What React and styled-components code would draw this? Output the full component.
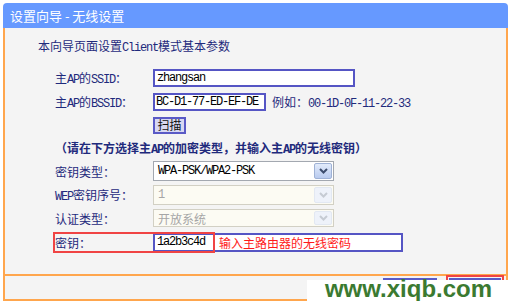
import styled, { createGlobalStyle } from "styled-components";

const GlobalStyle = createGlobalStyle`
  body {
    margin: 0;
    background: #fff;
    font-family: "Noto Sans CJK SC", sans-serif;
    font-size: 12px;
  }
`;

// ASCII runs use a narrow mono face, like the router page's SimSun
const mix = (text) =>
  text
    .split(/([\x21-\x7e]+)/)
    .filter(Boolean)
    .map((part, i) =>
      /^[\x21-\x7e]+$/.test(part) ? <Mono key={i}>{part}</Mono> : part
    );

const Chevron = ({ color }) => (
  <svg width="9" height="6" viewBox="0 0 9 6">
    <path d="M1 1 L4.5 4.5 L8 1" fill="none" stroke={color} strokeWidth="2" />
  </svg>
);

const App = () => {
  return (
    <>
      <GlobalStyle />
      <Panel>
        <Header>设置向导 - 无线设置</Header>
        <Body>
          <Title>{mix("本向导页面设置Client模式基本参数")}</Title>
          <Row $h={24}>
            <Label>{mix("主AP的SSID：")}</Label>
            <Input $w={202} $h={18}>
              <Mono>zhangsan</Mono>
            </Input>
          </Row>
          <Row $h={24}>
            <Label>{mix("主AP的BSSID：")}</Label>
            <Inline>
              <Input $w={113} $h={18} $pad={1}>
                <Mono>BC-D1-77-ED-EF-DE</Mono>
              </Input>
              <Hint>{mix("例如：00-1D-0F-11-22-33")}</Hint>
            </Inline>
          </Row>
          <Row $h={22}>
            <span />
            <div>
              <Button $w={33} $h={17}>扫描</Button>
            </div>
          </Row>
          <Row $h={23}>
            <Note>{mix("（请在下方选择主AP的加密类型，并输入主AP的无线密钥）")}</Note>
          </Row>
          <Row $h={24}>
            <Label>密钥类型：</Label>
            <Select>
              <SelectValue>
                <Mono>WPA-PSK/WPA2-PSK</Mono>
              </SelectValue>
              <DropButton>
                <Chevron color="#3d4d6e" />
              </DropButton>
            </Select>
          </Row>
          <Row $h={24}>
            <Label>{mix("WEP密钥序号：")}</Label>
            <Select $disabled>
              <SelectValue>
                <Mono>1</Mono>
              </SelectValue>
              <DropButton $disabled>
                <Chevron color="#c6cbd3" />
              </DropButton>
            </Select>
          </Row>
          <Row $h={22}>
            <Label>认证类型：</Label>
            <Select $disabled $h={18}>
              <SelectValue>开放系统</SelectValue>
              <DropButton $disabled>
                <Chevron color="#c6cbd3" />
              </DropButton>
            </Select>
          </Row>
          <Row $h={26}>
            <Label>密钥：</Label>
            <Input $w={250} $h={19}>
              <Mono>1a2b3c4d</Mono>
              <RedHint>输入主路由器的无线密码</RedHint>
            </Input>
            <Mark />
          </Row>
        </Body>
        <Footer>
          {/* labels are hidden under the watermark in the screenshot */}
          <Button $w={54} $h={19} aria-label="上一步" />
          <Button $w={52} $h={19} $marked aria-label="下一步" />
          <Watermark>www.xiqb.com</Watermark>
        </Footer>
      </Panel>
    </>
  );
};

const Panel = styled.div`
  margin: 3px 0 0 3px;
  width: 505px;
`;

const Header = styled.div`
  height: 25px;
  background: #6699ff;
  border-radius: 4px 4px 0 0;
  color: #fff;
  font-size: 13px;
  line-height: 25px;
  padding-left: 7px;
  white-space: pre;
`;

const Body = styled.div`
  height: 238px;
  padding-top: 8px;
  background: #f4f4f4;
  border: 2px solid #ffa64d;
  border-top: none;
`;

const Title = styled.div`
  height: 20px;
  line-height: 20px;
  padding-left: 33px;
  margin-bottom: 10px;
  color: #1f2a7c;
`;

const Row = styled.div`
  position: relative;
  display: grid;
  grid-template-columns: 98px 1fr;
  align-items: center;
  height: ${(p) => p.$h}px;
  padding-left: 50px;
`;

const Label = styled.div`
  color: #1f2a7c;
  white-space: nowrap;
`;

const Note = styled(Label)`
  grid-column: 1 / -1;
  font-weight: bold;
`;

const Mono = styled.span`
  font-family: "Liberation Mono", monospace;
  font-size: 12px;
  letter-spacing: -1.2px;
`;

const Inline = styled.div`
  display: flex;
  align-items: center;
  gap: 6px;
`;

const Hint = styled.span`
  color: #1f2a7c;
  white-space: nowrap;
`;

const Input = styled.div`
  box-sizing: border-box;
  width: ${(p) => p.$w}px;
  height: ${(p) => p.$h}px;
  display: flex;
  align-items: center;
  padding-left: ${(p) => p.$pad ?? 2}px;
  background: #fff;
  border: 2px solid #5555c4;
  color: #000;
  white-space: nowrap;
  overflow: hidden;
`;

const RedHint = styled.span`
  color: #ff1a1a;
  margin-left: 14px;
`;

const Mark = styled.div`
  position: absolute;
  left: 48px;
  top: 3px;
  width: 162px;
  height: 21px;
  box-sizing: border-box;
  border: 2px solid #f04444;
  pointer-events: none;
`;

const Button = styled.button`
  box-sizing: border-box;
  width: ${(p) => p.$w}px;
  height: ${(p) => p.$h}px;
  padding: 0;
  font-family: "Noto Sans CJK SC", sans-serif;
  font-size: 12px;
  line-height: 1;
  color: #111;
  background: #d8d8f2;
  border: 2px solid #5a5ac6;
  outline: ${(p) => (p.$marked ? "2px solid #f04444" : "none")};
  outline-offset: 1px;
`;

const Select = styled.div`
  box-sizing: border-box;
  width: 181px;
  height: ${(p) => p.$h ?? 20}px;
  display: flex;
  align-items: stretch;
  background: ${(p) => (p.$disabled ? "#fcfbf3" : "#fff")};
  border: 1px solid ${(p) => (p.$disabled ? "#d2d0c4" : "#a3a8b0")};
  color: ${(p) => (p.$disabled ? "#a6a6a6" : "#000")};
`;

const SelectValue = styled.div`
  flex: 1;
  display: flex;
  align-items: center;
  padding-left: 4px;
  white-space: nowrap;
`;

const DropButton = styled.div`
  width: 16px;
  margin: 1px;
  display: flex;
  align-items: center;
  justify-content: center;
  border-radius: 2px;
  border: 1px solid ${(p) => (p.$disabled ? "#e2e8f2" : "#9fb2d6")};
  background: ${(p) =>
    p.$disabled ? "#eef2fa" : "linear-gradient(#e2ebfb, #b9cbef)"};
`;

const Footer = styled.div`
  position: relative;
  height: 21px;
  display: flex;
  justify-content: flex-end;
  gap: 12px;
  padding: 2px 5px 0 0;
  background: #f4f4f4;
  border: 2px solid #ffa64d;
  border-top: none;
`;

const Watermark = styled.div`
  position: absolute;
  left: 302px;
  top: 4px;
  width: 203px;
  height: 23px;
  background: #fff;
  color: #3b7a31;
  font-family: "Liberation Sans", Arial, sans-serif;
  font-weight: bold;
  font-size: 24px;
  line-height: 17px;
  text-align: center;
`;

export default App;
